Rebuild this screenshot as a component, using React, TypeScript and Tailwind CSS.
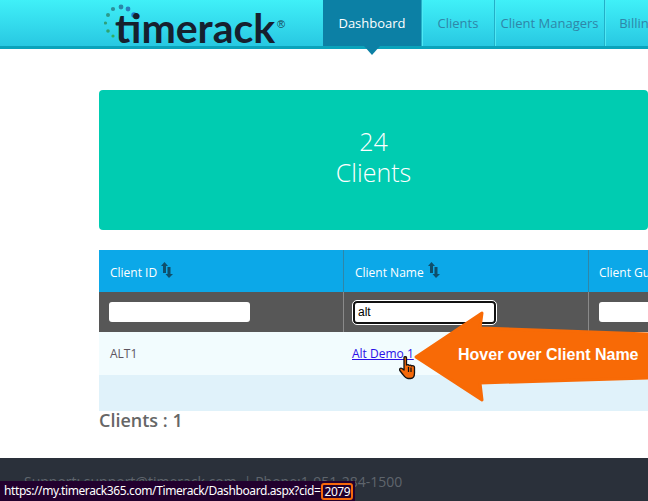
const navItems = [
  { label: 'Clients', width: 'w-[73px]' },
  { label: 'Client Managers', width: 'w-[110px]' },
  { label: 'Billing', width: 'w-[66px]' }
]

function Logo() {
  return (
    <div className="relative w-[219px] h-[46px] shrink-0">
      <svg className="absolute left-0 top-0" width="60" height="46" viewBox="0 0 60 46">
        <circle cx="1.5" cy="23" r="1.6" fill="#2fa07c" />
        <circle cx="4" cy="31" r="1.8" fill="#2fa36f" />
        <circle cx="9" cy="36" r="1.6" fill="#2fae5f" />
        <circle cx="4" cy="15" r="2" fill="#2c9a8b" />
        <circle cx="9" cy="9" r="2.1" fill="#2c8f9b" />
        <circle cx="17" cy="7" r="2.4" fill="#2a87a8" />
        <circle cx="24" cy="9" r="2.4" fill="#2a7fbc" />
        <circle cx="30" cy="15" r="2.7" fill="#2274d0" />
      </svg>
      <span className="absolute left-[11px] top-[5px] font-['Lato',sans-serif] font-bold text-[41px] leading-[46px] text-[#16202e]">
        timerack
      </span>
      <span className="absolute left-[173px] top-[19px] font-['Liberation_Sans',sans-serif] text-[11px] leading-none text-[#16404f]">
        ®
      </span>
    </div>
  )
}

function SortIcon() {
  return (
    <svg width="12" height="16" viewBox="0 0 12 16" className="-mt-[7px] -ml-[2px] shrink-0">
      <path d="M3.5 0 L7 4 H5 V11 H2 V4 H0 Z" fill="#0f4f6b" />
      <path d="M6.5 5 H9.5 V12 H12 L8 16 L4.5 12 H6.5 Z" fill="#0f4f6b" />
    </svg>
  )
}

function HandCursor() {
  return (
    <svg width="20" height="24" viewBox="0 0 20 24">
      <path
        d="M5 1.5 C5 0.5 7.5 0.5 7.5 1.5 V9 C8.5 8.5 9.5 8.5 10 9.5 C11 9 12 9 12.5 10 C13.5 9.5 15.5 9.5 15.5 11.5 V17 C15.5 20 14 22.5 11.5 22.5 H9 C6.5 22.5 5 20 3.5 18 L0.8 14.5 C0 13 1.5 11.5 3 12.5 L5 14 Z"
        fill="#f5690a"
        stroke="#111"
        strokeWidth="1.3"
        strokeLinejoin="round"
      />
      <path d="M9.5 11 V16 M12 11.5 V16" stroke="#111" strokeWidth="1.2" />
    </svg>
  )
}

export default function App() {
  return (
    <div className="relative w-[648px] h-[501px] overflow-hidden bg-white flex flex-col font-['Open_Sans',sans-serif]">
      <header className="flex h-[49px] shrink-0 border-b-[3px] border-[#0aa3bb] bg-gradient-to-b from-[#40f0f8] to-[#28c8e2] pl-[104px]">
        <Logo />
        <nav className="flex">
          <div className="relative w-[98px] bg-[#0c80a5] text-white text-[13px] flex items-center justify-center pt-0.5">
            Dashboard
            <div className="absolute left-[41px] top-[46px] w-0 h-0 border-x-[8px] border-x-transparent border-t-[9px] border-t-[#0c80a5]" />
          </div>
          {navItems.map(item => (
            <div
              key={item.label}
              className={`${item.width} shrink-0 border-l border-[#22b0c8] shadow-[inset_1px_0_0_#4fe8f4] text-[#2f86a8] text-[13px] flex items-center justify-center pt-0.5 whitespace-nowrap`}
            >
              {item.label}
            </div>
          ))}
        </nav>
      </header>

      <main className="flex-1 pl-[99px] pt-[41px] w-[760px]">
        <div className="h-[140px] w-[549px] rounded bg-[#00ccb1] text-white flex flex-col items-center justify-center pb-[6px] font-light text-[25px] leading-[31px]">
          <div>24</div>
          <div>Clients</div>
        </div>

        <div className="mt-5 w-[660px] text-[12px]">
          <div className="grid grid-cols-[245px_245px_170px] h-[42px] bg-[#0ca8e8] text-white">
            <div className="flex items-center gap-[6px] pl-[11px] pt-[4px] border-r border-[#2f86a8]">
              Client ID <SortIcon />
            </div>
            <div className="flex items-center gap-[6px] pl-[11px] pt-[4px] border-r border-[#2f86a8]">
              Client Name <SortIcon />
            </div>
            <div className="flex items-center pl-[10px] pt-[4px] whitespace-nowrap">Client Guid</div>
          </div>
          <div className="grid grid-cols-[245px_245px_170px] h-[40px] bg-[#575757]">
            <div className="flex items-center pl-[10px] border-r border-[#8a8a8a]">
              <div className="w-[141px] h-[20px] rounded-[3px] bg-white" />
            </div>
            <div className="flex items-center pl-[9px] border-r border-[#8a8a8a]">
              <div className="w-[143px] h-[23px] rounded-[4px] bg-white border-2 border-[#111] outline outline-1 outline-white pl-[3px] text-[12px] leading-[19px] text-black font-['Liberation_Sans',sans-serif]">
                alt
              </div>
            </div>
            <div className="flex items-center pl-[10px]">
              <div className="w-[141px] h-[20px] rounded-[3px] bg-white" />
            </div>
          </div>
          <div className="grid grid-cols-[245px_245px_170px] h-[43px] bg-[#f2fcfe] text-[12px] text-[#5e5560]">
            <div className="flex items-center pl-[11px]">ALT1</div>
            <div className="flex items-center pl-[8px]">
              <a className="underline text-[#2a10e8]" href="#">Alt Demo 1</a>
            </div>
            <div />
          </div>
          <div className="h-[36px] bg-[#e0f2fa]" />
        </div>

        <div className="-mt-[1px] text-[18px] leading-[20px] font-semibold text-[#666]">Clients : 1</div>
      </main>

      <footer className="h-[43px] shrink-0 bg-[#2a303a] pl-[24px] pt-[15px] text-[14px] leading-[18px] text-[#5f656d] whitespace-nowrap">
        Support: support@timerack.com &nbsp;| Phone:1-951-284-1500
      </footer>

      <div className="absolute left-0 bottom-0 h-[20px] w-[355px] bg-[#22002e] pl-[4px] flex items-center text-[12px] tracking-[-0.4px] text-white font-['Noto_Sans',sans-serif] whitespace-nowrap">
        <span>https://my.timerack365.com/Timerack/Dashboard.aspx?cid=</span>
        <span className="ml-[1px] h-[17px] px-[1px] rounded-[3px] border-2 border-[#f5690a] leading-[13px]">2079</span>
      </div>

      <svg className="absolute left-[410px] top-[306px]" width="238" height="102" viewBox="0 0 238 102">
        <path
          d="M6 51 L72 7 L70 22 L238 28 V72 L70 77 L72 94 Z"
          fill="#f86a06"
          stroke="#f86a06"
          strokeWidth="3"
          strokeLinejoin="round"
        />
      </svg>
      <span className="absolute left-[458px] top-[345px] text-[16px] leading-[20px] font-bold text-white font-['Liberation_Sans',sans-serif] whitespace-nowrap">
        Hover over Client Name
      </span>
      <div className="absolute left-[399px] top-[356px]">
        <HandCursor />
      </div>
    </div>
  )
}
